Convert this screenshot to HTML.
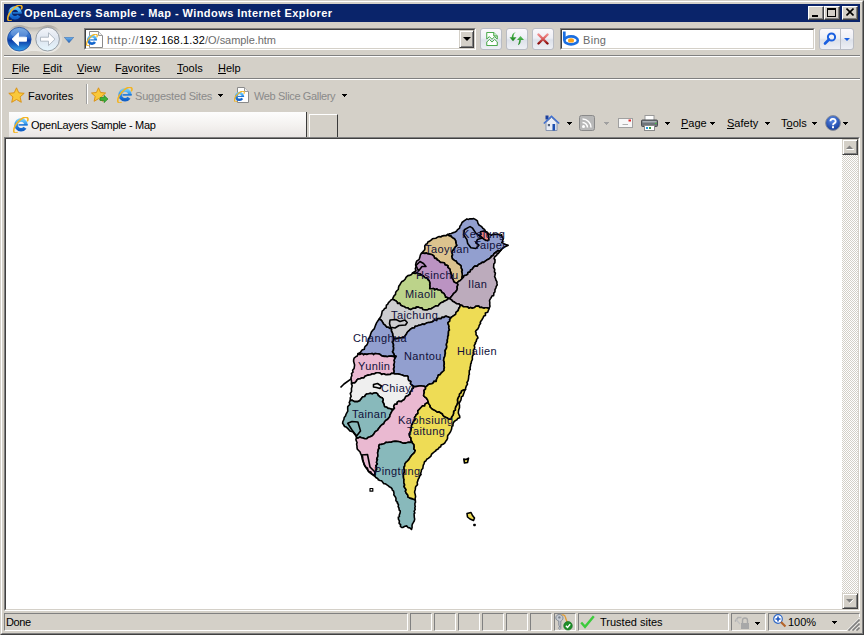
<!DOCTYPE html>
<html><head><meta charset="utf-8">
<style>
*{margin:0;padding:0;box-sizing:border-box}
html,body{width:864px;height:635px;overflow:hidden;background:#D4D0C8}
body{position:relative;font-family:"Liberation Sans",sans-serif;font-size:11px;color:#000}
.a{position:absolute}
.t{position:absolute;white-space:nowrap;line-height:13px}
.u{text-decoration:underline}
.sunk{border-style:solid;border-width:1px;border-color:#808080 #fff #fff #808080}
.btn8{position:absolute;border:1px solid #b9bcc4;border-radius:3px;background:linear-gradient(#fbf8fb,#eef0f6 45%,#dde1ea 55%,#eef0f5)}
.tri{position:absolute;width:5px;height:1px;background:currentColor;color:#000}.tri::before,.tri::after{content:"";position:absolute;height:1px;background:currentColor}.tri::before{left:1px;top:1px;width:3px}.tri::after{left:2px;top:2px;width:1px}
</style></head><body>
<svg width="0" height="0" style="position:absolute"><defs>
<linearGradient id="ieg" x1="0" y1="0" x2="0" y2="1"><stop offset="0" stop-color="#6cc8fb"/><stop offset="0.5" stop-color="#2a8de8"/><stop offset="1" stop-color="#1160c8"/></linearGradient>
<symbol id="ie" viewBox="0 0 16 16">
<path d="M12.9 7.9A4.9 4.9 0 1 0 12 10.7" fill="none" stroke="url(#ieg)" stroke-width="3.6"/>
<rect x="5.5" y="7.1" width="9.2" height="1.6" fill="#1f78d8"/>
<path d="M1 15.2C0 12 2.5 6.5 7.5 2.6C10.5 0.4 13.6 -0.2 14.6 1C15.3 1.9 14.9 3.3 14.2 4.4" fill="none" stroke="#f2b425" stroke-width="1.6"/>
<path d="M1 15.2C1.6 16 3.2 16 4.6 15.3" fill="none" stroke="#f2b425" stroke-width="1.5"/>
</symbol>
</defs></svg>
<!-- window frame -->
<div class="a" style="left:0;top:0;width:864px;height:635px;border-style:solid;border-width:1px;border-color:#D4D0C8 #404040 #404040 #D4D0C8"></div>
<div class="a" style="left:1px;top:1px;width:862px;height:633px;border-style:solid;border-width:1px;border-color:#fff #808080 #808080 #fff"></div>
<!-- title bar -->
<div class="a" style="left:4px;top:4px;width:856px;height:18px;background:#0A246A"></div>
<svg class="a" style="left:7px;top:5px" width="16" height="16"><use href="#ie"/></svg>
<div class="t" style="left:24px;top:7px;color:#fff;font-weight:bold;font-size:11px;letter-spacing:0.43px">OpenLayers Sample - Map - Windows Internet Explorer</div>
<div class="a" style="left:808px;top:6px;width:16px;height:14px;background:#D4D0C8;border-style:solid;border-width:1px;border-color:#fff #404040 #404040 #fff;box-shadow:inset -1px -1px #808080"></div>
<div class="a" style="left:812px;top:15px;width:6px;height:2px;background:#000"></div>
<div class="a" style="left:824px;top:6px;width:16px;height:14px;background:#D4D0C8;border-style:solid;border-width:1px;border-color:#fff #404040 #404040 #fff;box-shadow:inset -1px -1px #808080"></div>
<div class="a" style="left:827px;top:8px;width:9px;height:9px;border:1px solid #000;border-top-width:2px"></div>
<div class="a" style="left:842px;top:6px;width:16px;height:14px;background:#D4D0C8;border-style:solid;border-width:1px;border-color:#fff #404040 #404040 #fff;box-shadow:inset -1px -1px #808080"></div>
<svg class="a" style="left:846px;top:8px" width="8" height="8" viewBox="0 0 8 8"><path d="M0.5 0.5L7.5 7.5M7.5 0.5L0.5 7.5" stroke="#000" stroke-width="1.6"/></svg>


<!-- nav buttons -->
<svg class="a" style="left:4px;top:23px" width="60" height="32" viewBox="0 0 60 32">
<defs>
<linearGradient id="bk" x1="0" y1="0" x2="0" y2="1"><stop offset="0" stop-color="#5d9ae0"/><stop offset="0.42" stop-color="#2a68c8"/><stop offset="0.55" stop-color="#0a3aa6"/><stop offset="1" stop-color="#3aa6ee"/></linearGradient>
<linearGradient id="fw" x1="0" y1="0" x2="0" y2="1"><stop offset="0" stop-color="#f4f6fa"/><stop offset="0.5" stop-color="#dde5ef"/><stop offset="1" stop-color="#e6f6fd"/></linearGradient>
<linearGradient id="bz" x1="0" y1="0" x2="0" y2="1"><stop offset="0" stop-color="#a9a59e"/><stop offset="0.25" stop-color="#d8d5ce"/><stop offset="1" stop-color="#eceae5"/></linearGradient>
</defs>
<path d="M15.5 2.3C20 2.3 23 4.6 30 4.6S40 2.3 44.5 2.3A13.7 13.7 0 0 1 44.5 29.7C40 29.7 37 28 30 28S20 29.7 15.5 29.7A13.7 13.7 0 0 1 15.5 2.3Z" fill="url(#bz)"/>
<circle cx="15.3" cy="16.2" r="11.8" fill="url(#bk)" stroke="#1d4a9a" stroke-width="0.8"/>
<ellipse cx="15.3" cy="10" rx="8.5" ry="5" fill="#fff" opacity="0.18"/>
<path d="M8 16.2L14.5 9.8V14.2H22.5V18.2H14.5V22.6Z" fill="#fff" stroke="#fff" stroke-width="0.9" stroke-linejoin="round"/>
<circle cx="43.6" cy="16.2" r="11.8" fill="url(#fw)" stroke="#8c949c" stroke-width="0.9"/>
<path d="M51 16.2L44.5 9.8V14.2H36.5V18.2H44.5V22.6Z" fill="#fdfdfe" stroke="#a9b3bd" stroke-width="0.9" stroke-linejoin="round"/>
</svg>
<svg class="a" style="left:64px;top:37px" width="10" height="6" viewBox="0 0 10 6"><defs><linearGradient id="dd" x1="0" y1="0" x2="0" y2="1"><stop offset="0" stop-color="#6fb6f0"/><stop offset="1" stop-color="#1d5fb8"/></linearGradient></defs><path d="M0.3 0.3H9.7L5 5.8Z" fill="url(#dd)" stroke="#2a5aa0" stroke-width="0.5"/></svg>
<!-- address box -->
<div class="a" style="left:84px;top:28px;width:392px;height:22px;border-style:solid;border-width:1px;border-color:#808080 #fff #fff #808080"></div>
<div class="a" style="left:85px;top:29px;width:390px;height:20px;border-style:solid;border-width:1px;border-color:#404040 #D4D0C8 #D4D0C8 #404040;background:#fff"></div>
<svg class="a" style="left:89px;top:31px" width="14" height="17" viewBox="0 0 14 17"><path d="M0.5 0.5H9.5L13.5 4.5V16.5H0.5Z" fill="#fff" stroke="#8a8a8a"/><path d="M9.5 0.5V4.5H13.5" fill="#f0f0f0" stroke="#9a9a9a"/></svg><svg class="a" style="left:86px;top:34px" width="12" height="12" viewBox="0 0 16 16"><use href="#ie"/></svg>
<div class="t" style="left:107px;top:34px;letter-spacing:0.15px;color:#6d6d6d"><span style="letter-spacing:0.65px">http://</span><span style="color:#000">192.168.1.32</span><span style="letter-spacing:-0.05px">/O/sample.htm</span></div>
<div class="a" style="left:459px;top:30px;width:15px;height:18px;background:#D4D0C8;border-style:solid;border-width:1px;border-color:#D4D0C8 #404040 #404040 #D4D0C8;box-shadow:inset 1px 1px #fff,inset -1px -1px #808080"></div>
<div class="a" style="left:463px;top:37px;width:0;height:0;border-left:4px solid transparent;border-right:4px solid transparent;border-top:4px solid #000"></div>
<!-- compat / refresh / stop -->
<div class="btn8" style="left:480px;top:28px;width:22px;height:22px"></div>
<svg class="a" style="left:486px;top:32px" width="12" height="14" viewBox="0 0 13 16"><path d="M0.5 0.5H8.5L12.5 4.5V8L9.5 5.3L6.5 8.3L3.5 5.3L0.5 8Z" fill="#fff" stroke="#2a9a2a"/><path d="M8.5 0.5V4.5H12.5" fill="#d8f0d8" stroke="#2a9a2a"/><path d="M0.5 11.5L3.5 8.5L6.5 11.5L9.5 8.5L12.5 11.3V15.5H0.5Z" fill="#fff" stroke="#2a9a2a"/></svg>
<div class="btn8" style="left:506px;top:28px;width:22px;height:22px"></div>
<svg class="a" style="left:506px;top:28px" width="22" height="22" viewBox="0 0 22 22"><defs><linearGradient id="gr" x1="0" y1="0" x2="0" y2="1"><stop offset="0" stop-color="#5cc05a"/><stop offset="1" stop-color="#17801a"/></linearGradient></defs>
<path d="M10 4.2C8.2 5 7.6 6.6 7.4 9V9.3H10.5L7 13.3L3.5 9.3H5.7C5.9 6.3 7.3 4.6 10 4.2Z" fill="url(#gr)"/>
<path d="M12.3 17.2C14.1 16.4 14.7 14.6 14.9 12.3V12H18L14.5 8L11 12H13.2C13 15 11.8 16.6 12.3 17.2Z" fill="url(#gr)"/></svg>
<div class="btn8" style="left:532px;top:28px;width:22px;height:22px"></div>
<svg class="a" style="left:537px;top:33px" width="12" height="12" viewBox="0 0 12 12"><defs><linearGradient id="xr" x1="0" y1="0" x2="0" y2="1"><stop offset="0" stop-color="#f08a8a"/><stop offset="0.5" stop-color="#d85a5a"/><stop offset="1" stop-color="#8a0c0c"/></linearGradient></defs><path d="M1.5 1.5L10.5 10.5M10.5 1.5L1.5 10.5" stroke="url(#xr)" stroke-width="2.4" stroke-linecap="round"/></svg>
<!-- search -->
<div class="a" style="left:560px;top:28px;width:255px;height:22px;border-style:solid;border-width:1px;border-color:#808080 #fff #fff #808080"></div>
<div class="a" style="left:561px;top:29px;width:253px;height:20px;border-style:solid;border-width:1px;border-color:#404040 #D4D0C8 #D4D0C8 #404040;background:#fff"></div>
<svg class="a" style="left:562px;top:31px" width="18" height="16" viewBox="0 0 18 16"><path d="M2.3 0.5V9.4" stroke="#1a6ee0" stroke-width="2.7"/><ellipse cx="9.1" cy="9.4" rx="6.7" ry="4" fill="none" stroke="#1a6ee0" stroke-width="2.6"/><ellipse cx="9" cy="9.4" rx="3" ry="2.2" fill="#fba21a"/></svg>
<div class="t" style="left:583px;top:34px;color:#6a6a6a;letter-spacing:0.3px">Bing</div>
<div class="btn8" style="left:819px;top:28px;width:35px;height:22px"></div>
<div class="a" style="left:840px;top:29px;width:1px;height:20px;background:#b9bcc4"></div>
<svg class="a" style="left:822px;top:31px" width="16" height="16" viewBox="0 0 16 16"><circle cx="9.5" cy="6" r="3.6" fill="none" stroke="#1a5fe0" stroke-width="2"/><path d="M7 8.5L3 12.5" stroke="#1a5fe0" stroke-width="2.6" stroke-linecap="round"/></svg>
<div class="a" style="left:844px;top:38px;width:0;height:0;border-left:3px solid transparent;border-right:3px solid transparent;border-top:3px solid #1a5fe0"></div>

<!-- menu -->
<div class="t" style="left:12px;top:62px"><span class="u">F</span>ile</div>
<div class="t" style="left:43px;top:62px"><span class="u">E</span>dit</div>
<div class="t" style="left:77px;top:62px"><span class="u">V</span>iew</div>
<div class="t" style="left:115px;top:62px">F<span class="u">a</span>vorites</div>
<div class="t" style="left:177px;top:62px"><span class="u">T</span>ools</div>
<div class="t" style="left:218px;top:62px"><span class="u">H</span>elp</div>

<!-- favorites bar -->
<svg class="a" style="left:8px;top:87px" width="17" height="17" viewBox="0 0 17 17"><path d="M8.5 0.8L10.8 5.8L16.2 6.3L12.1 9.9L13.3 15.3L8.5 12.5L3.7 15.3L4.9 9.9L0.8 6.3L6.2 5.8Z" fill="#f9c83a" stroke="#d98d0e" stroke-width="0.9"/></svg>
<div class="t" style="left:28px;top:90px">Favorites</div>
<div class="a" style="left:86px;top:84px;width:1px;height:20px;background:#a0a0a0"></div>
<div class="a" style="left:87px;top:84px;width:1px;height:20px;background:#fff"></div>
<svg class="a" style="left:91px;top:87px" width="18" height="17" viewBox="0 0 18 17"><path d="M7.5 0.8L9.6 5.5L14.6 6L10.8 9.3L11.9 14.3L7.5 11.7L3.1 14.3L4.2 9.3L0.5 6L5.4 5.5Z" fill="#f9c83a" stroke="#d98d0e" stroke-width="0.9"/><path d="M9 10.5H13V8.3L17 12L13 15.7V13.5H9Z" fill="#3fb236" stroke="#1f7f1f" stroke-width="0.6"/></svg>
<svg class="a" style="left:117px;top:87px" width="16" height="16"><use href="#ie"/></svg>
<div class="t" style="left:135px;top:90px;color:#8a8a8a;letter-spacing:-0.2px">Suggested Sites</div>
<div class="tri" style="left:218px;top:94px"></div>
<svg class="a" style="left:237px;top:87px" width="12" height="16" viewBox="0 0 12 16"><path d="M0.5 0.5H7.5L11.5 4.5V15.5H0.5Z" fill="#fff" stroke="#8a8a8a"/><path d="M7.5 0.5V4.5H11.5" fill="#eee" stroke="#9a9a9a"/></svg><svg class="a" style="left:234px;top:91px" width="11" height="11" viewBox="0 0 16 16"><use href="#ie"/></svg>
<div class="t" style="left:254px;top:90px;color:#8a8a8a;letter-spacing:-0.35px">Web Slice Gallery</div>
<div class="tri" style="left:342px;top:94px"></div>

<!-- tab row -->
<div class="a" style="left:9px;top:112px;width:298px;height:26px;background:linear-gradient(#fdfdfd,#f4f2f0 50%,#e8e4e2);border-right:1px solid #3a3a3a"></div>
<svg class="a" style="left:13px;top:117px" width="16" height="16"><use href="#ie"/></svg>
<div class="t" style="left:31px;top:119px;letter-spacing:-0.3px">OpenLayers Sample - Map</div>
<div class="a" style="left:309px;top:114px;width:29px;height:24px;border-style:solid;border-width:1px 1px 0 1px;border-color:#fff #3a3a3a #fff #fff"></div>


<!-- command bar -->
<svg class="a" style="left:543px;top:115px" width="17" height="16" viewBox="0 0 17 16"><rect x="2.5" y="0.5" width="3" height="4" fill="#1c3f9c"/><path d="M3 7.5V15.5H14V7.5L8.5 2.5Z" fill="#e9edf5" stroke="#7d8cab" stroke-width="0.9"/><path d="M0.8 8.5L8.5 1.2L16.2 8.5" fill="none" stroke="#3d6ed0" stroke-width="1.5"/><rect x="9.5" y="9" width="2.6" height="6.5" fill="#1d4fb0"/><rect x="4.8" y="9" width="2.2" height="2.2" fill="#54637d"/></svg>
<div class="tri" style="left:567px;top:122px"></div>
<svg class="a" style="left:579px;top:115px" width="16" height="16" viewBox="0 0 16 16"><rect x="0.5" y="0.5" width="15" height="15" rx="2" fill="#b8b8b8" stroke="#8a8a8a"/><circle cx="4.5" cy="11.5" r="1.5" fill="#fff"/><path d="M3.5 7.5a5 5 0 0 1 5 5M3.5 4a8.5 8.5 0 0 1 8.5 8.5" fill="none" stroke="#fff" stroke-width="1.5"/></svg>
<div class="tri" style="left:604px;top:122px;color:#a0a0a0"></div>
<svg class="a" style="left:618px;top:118px" width="15" height="10" viewBox="0 0 15 10"><rect x="0.5" y="0.5" width="14" height="9" fill="#f7f7f7" stroke="#a0a0a0"/><path d="M4.5 6.5H10" stroke="#b0b0b0"/><rect x="10.5" y="1.5" width="2.5" height="2" fill="#e02828"/></svg>
<svg class="a" style="left:641px;top:115px" width="17" height="16" viewBox="0 0 17 16"><rect x="4" y="0.5" width="9" height="5" fill="#fff" stroke="#9a9a9a"/><rect x="0.5" y="5" width="16" height="6.5" rx="1" fill="#6e747a" stroke="#4a4e52"/><rect x="1.5" y="6" width="14" height="1.5" fill="#a9afb5"/><rect x="3.5" y="10.5" width="10" height="5" fill="#fff" stroke="#8a8a8a"/><rect x="5" y="12" width="2" height="2" fill="#2a9ae0"/><rect x="8" y="12" width="2" height="2" fill="#3aa040"/><rect x="14" y="7.8" width="1.5" height="1.2" fill="#40c040"/></svg>
<div class="tri" style="left:665px;top:122px"></div>
<div class="t" style="left:681px;top:117px"><span class="u">P</span>age</div>
<div class="tri" style="left:710px;top:122px"></div>
<div class="t" style="left:727px;top:117px"><span class="u">S</span>afety</div>
<div class="tri" style="left:765px;top:122px"></div>
<div class="t" style="left:781px;top:117px">T<span class="u">o</span>ols</div>
<div class="tri" style="left:812px;top:122px"></div>
<svg class="a" style="left:825px;top:115px" width="16" height="16" viewBox="0 0 16 16"><defs><radialGradient id="hg" cx="0.45" cy="0.3" r="0.7"><stop offset="0" stop-color="#5a8ae8"/><stop offset="1" stop-color="#143c9a"/></radialGradient></defs><circle cx="8" cy="8" r="7.4" fill="url(#hg)" stroke="#8a8e96" stroke-width="1"/><path d="M5.4 6.2a2.6 2.4 0 1 1 3.7 2.2c-0.8 0.4-1.1 0.9-1.1 1.8" fill="none" stroke="#fff" stroke-width="1.8"/><rect x="7" y="11.2" width="2" height="2" fill="#fff"/></svg>
<div class="tri" style="left:843px;top:122px"></div>


<!-- address row -->
<div class="a" style="left:4px;top:55px;width:856px;height:1px;background:#808080"></div>
<div class="a" style="left:4px;top:56px;width:856px;height:1px;background:#fff"></div>
<div class="a" style="left:4px;top:78px;width:856px;height:1px;background:#808080"></div>
<div class="a" style="left:4px;top:79px;width:856px;height:1px;background:#fff"></div>

<!-- content area -->
<div class="a" style="left:4px;top:137px;width:856px;height:474px;border-style:solid;border-width:1px;border-color:#808080 #fff #fff #808080"></div>
<div class="a" style="left:5px;top:138px;width:854px;height:472px;border-style:solid;border-width:1px;border-color:#404040 #D4D0C8 #D4D0C8 #404040;background:#fff"></div>

<!--MAP--><svg class="a" style="left:0;top:0" width="864" height="635" viewBox="0 0 864 635">
<g stroke="#000" stroke-width="1.6" stroke-linejoin="round">
<path d="M501.5 249.5 L502.9 247.9 L505.1 246.7 L506.6 246.1 L508.2 245.2 L505.9 244.6 L504.3 243.9 L502.7 242.8 L501.7 242.8 L502.4 241.2 L503.3 238.7 L501.9 236.3 L501.7 234.7 L500.3 235.4 L498.6 234.5 L497.6 234.0 L495.8 234.4 L493.1 234.1 L491.7 235.2 L490.4 234.7 L488.3 233.7 L487.3 232.3 L485.5 231.4 L484.5 229.4 L482.7 228.3 L482.3 227.4 L480.9 226.1 L479.0 225.0 L477.9 223.1 L477.4 220.9 L475.3 219.4 L473.4 218.5 L472.2 218.9 L469.8 218.8 L468.6 219.4 L466.9 218.9 L465.6 219.8 L464.4 220.7 L462.0 222.5 L461.1 224.8 L459.9 226.3 L459.6 228.2 L457.3 229.8 L456.7 231.0 L454.7 232.3 L453.4 232.6 L451.3 233.5 L449.3 233.9 L447.4 234.5 L449.3 235.9 L450.9 235.8 L451.1 236.6 L453.1 238.2 L454.5 238.8 L455.7 240.8 L455.8 242.5 L456.1 243.8 L456.7 245.4 L454.9 247.2 L454.1 248.8 L453.6 249.2 L452.3 250.9 L451.7 252.5 L452.5 255.1 L451.7 256.1 L452.3 258.7 L453.6 259.9 L454.7 260.5 L456.3 261.3 L457.1 263.0 L459.3 264.4 L460.5 265.3 L461.2 266.4 L461.0 267.8 L462.3 270.2 L461.6 271.0 L462.1 273.7 L462.3 275.2 L461.9 276.7 L461.8 279.0 L463.6 277.0 L464.2 275.5 L466.0 275.3 L467.7 274.3 L468.0 272.6 L470.1 271.9 L470.7 269.7 L472.0 269.5 L473.6 267.2 L474.8 266.1 L477.4 266.1 L478.5 264.4 L480.7 263.6 L482.4 262.2 L483.7 262.4 L485.3 261.2 L487.8 259.4 L489.0 258.9 L490.9 257.4 L491.4 256.1 L493.0 255.7 L494.0 253.7 L494.9 253.0 L496.3 252.0 L497.8 250.6 L500.1 251.0 L501.5 249.5Z" fill="#929fcf"/>
<path d="M447.4 234.5 L446.2 235.6 L444.0 235.6 L441.8 236.1 L441.0 236.9 L439.1 236.6 L438.0 236.9 L435.8 238.2 L433.8 238.5 L432.4 238.7 L431.4 239.9 L429.4 241.4 L428.1 241.7 L427.1 243.8 L425.9 244.3 L424.7 245.9 L424.9 248.2 L424.7 249.8 L423.7 250.9 L421.5 253.2 L423.5 253.2 L424.8 253.4 L426.3 253.1 L428.2 253.9 L430.3 254.3 L432.4 254.8 L433.9 256.1 L434.5 258.1 L436.6 258.6 L437.0 259.8 L439.1 260.9 L440.4 262.4 L441.7 262.5 L444.3 262.8 L445.1 264.9 L446.8 265.3 L448.0 266.0 L447.8 267.4 L449.9 269.1 L450.1 270.8 L450.9 272.9 L450.7 273.5 L452.1 275.6 L451.5 277.3 L452.3 278.5 L453.1 279.6 L453.8 281.8 L455.6 282.9 L457.0 283.0 L459.0 281.0 L459.7 281.0 L461.8 279.0 L461.9 276.7 L462.3 275.2 L462.1 273.7 L461.6 271.0 L462.3 270.2 L461.0 267.8 L461.2 266.4 L460.5 265.3 L459.3 264.4 L457.1 263.0 L456.3 261.3 L454.7 260.5 L453.6 259.9 L452.3 258.7 L451.7 256.1 L452.5 255.1 L451.7 252.5 L452.3 250.9 L453.6 249.2 L454.1 248.8 L454.9 247.2 L456.7 245.4 L456.1 243.8 L455.8 242.5 L455.7 240.8 L454.5 238.8 L453.1 238.2 L451.1 236.6 L450.9 235.8 L449.3 235.9 L447.4 234.5Z" fill="#dcc38e"/>
<path d="M421.5 253.2 L420.4 254.9 L419.8 257.4 L419.3 258.7 L418.9 259.6 L416.6 261.2 L416.0 263.1 L415.6 265.0 L416.1 266.6 L415.3 268.8 L416.0 270.8 L414.1 272.0 L412.6 273.0 L415.2 273.5 L417.2 272.8 L418.1 273.8 L420.4 274.1 L422.6 275.9 L423.2 275.9 L424.7 277.4 L426.9 278.0 L428.2 280.0 L429.2 280.7 L429.9 283.1 L429.7 284.7 L429.9 286.4 L429.7 288.7 L431.3 288.7 L433.8 288.6 L434.7 289.8 L436.7 289.0 L438.2 290.0 L440.7 290.2 L442.0 292.5 L443.9 293.4 L445.3 296.1 L445.5 297.3 L446.6 297.3 L448.5 298.5 L450.2 297.9 L451.4 296.4 L452.6 295.0 L453.8 293.3 L455.7 291.8 L456.8 290.2 L457.3 288.7 L457.1 286.7 L458.1 284.7 L457.0 283.0 L455.6 282.9 L453.8 281.8 L453.1 279.6 L452.3 278.5 L451.5 277.3 L452.1 275.6 L450.7 273.5 L450.9 272.9 L450.1 270.8 L449.9 269.1 L447.8 267.4 L448.0 266.0 L446.8 265.3 L445.1 264.9 L444.3 262.8 L441.7 262.5 L440.4 262.4 L439.1 260.9 L437.0 259.8 L436.6 258.6 L434.5 258.1 L433.9 256.1 L432.4 254.8 L430.3 254.3 L428.2 253.9 L426.3 253.1 L424.8 253.4 L423.5 253.2 L421.5 253.2Z" fill="#bb93c2"/>
<path d="M412.6 273.0 L411.6 274.4 L409.3 275.4 L407.9 275.6 L406.0 277.4 L405.1 279.3 L403.6 280.8 L401.6 281.8 L400.8 283.2 L399.7 285.1 L399.0 285.8 L398.5 287.5 L398.3 289.5 L397.1 290.5 L395.7 292.2 L395.5 294.4 L394.0 295.8 L392.9 298.2 L392.7 299.2 L394.7 300.3 L395.9 300.9 L397.1 302.0 L397.5 303.4 L399.9 303.3 L400.6 305.0 L401.8 305.8 L402.9 306.2 L404.2 306.6 L405.9 307.8 L408.0 307.9 L408.5 308.7 L410.7 309.6 L412.5 308.6 L413.5 308.2 L415.8 308.2 L416.2 307.0 L418.4 307.1 L419.9 307.9 L421.9 307.9 L422.8 309.5 L425.0 309.9 L427.4 309.9 L429.1 308.8 L430.8 309.0 L432.9 307.6 L434.2 306.9 L435.8 305.9 L438.2 305.9 L439.2 304.4 L440.9 302.7 L443.1 302.0 L444.8 300.7 L445.1 300.9 L447.0 299.9 L448.5 298.5 L446.6 297.3 L445.5 297.3 L445.3 296.1 L443.9 293.4 L442.0 292.5 L440.7 290.2 L438.2 290.0 L436.7 289.0 L434.7 289.8 L433.8 288.6 L431.3 288.7 L429.7 288.7 L429.9 286.4 L429.7 284.7 L429.9 283.1 L429.2 280.7 L428.2 280.0 L426.9 278.0 L424.7 277.4 L423.2 275.9 L422.6 275.9 L420.4 274.1 L418.1 273.8 L417.2 272.8 L415.2 273.5 L412.6 273.0Z" fill="#bcd38a"/>
<path d="M501.5 249.5 L500.1 251.0 L497.8 250.6 L496.3 252.0 L494.9 253.0 L494.0 253.7 L493.0 255.7 L491.4 256.1 L490.9 257.4 L489.0 258.9 L487.8 259.4 L485.3 261.2 L483.7 262.4 L482.4 262.2 L480.7 263.6 L478.5 264.4 L477.4 266.1 L474.8 266.1 L473.6 267.2 L472.0 269.5 L470.7 269.7 L470.1 271.9 L468.0 272.6 L467.7 274.3 L466.0 275.3 L464.2 275.5 L463.6 277.0 L461.8 279.0 L459.7 281.0 L459.0 281.0 L457.0 283.0 L458.1 284.7 L457.1 286.7 L457.3 288.7 L456.8 290.2 L455.7 291.8 L453.8 293.3 L452.6 295.0 L451.4 296.4 L450.2 297.9 L448.5 298.5 L450.1 298.9 L451.7 300.1 L452.6 301.3 L454.7 302.3 L456.5 303.6 L458.8 303.9 L460.4 305.2 L461.9 305.4 L463.5 306.8 L465.9 306.8 L467.6 306.9 L468.9 308.3 L470.6 307.5 L472.2 308.3 L474.6 307.5 L476.0 306.2 L478.7 306.0 L479.9 307.5 L481.9 307.4 L484.2 308.3 L484.8 307.7 L486.7 307.8 L489.0 308.6 L490.0 306.3 L489.7 304.5 L489.8 302.7 L489.5 300.5 L490.2 299.1 L490.7 298.3 L492.1 295.8 L493.6 295.6 L493.9 292.9 L494.9 292.0 L495.0 289.6 L495.9 287.8 L496.3 286.3 L497.3 284.9 L497.0 283.9 L496.9 281.6 L496.0 280.2 L495.5 278.4 L494.6 276.7 L494.9 275.5 L495.4 273.0 L494.4 271.9 L494.7 269.4 L493.6 267.5 L493.7 266.0 L493.8 264.0 L494.9 262.7 L495.0 259.6 L494.0 258.7 L494.9 256.5 L496.7 255.3 L497.4 253.4 L498.3 253.6 L499.6 251.8 L501.5 249.5Z" fill="#bcabbc"/>
<path d="M392.7 299.2 L391.5 299.7 L390.4 300.7 L388.5 302.6 L387.6 304.4 L386.4 305.2 L386.1 307.9 L384.5 308.6 L383.6 310.0 L382.2 311.2 L381.8 313.3 L381.3 315.5 L380.7 316.7 L379.2 319.0 L381.3 320.2 L382.8 322.6 L383.6 324.1 L385.1 325.2 L386.8 327.3 L388.3 327.2 L389.4 328.3 L391.5 328.9 L391.3 330.8 L392.3 332.8 L392.6 333.7 L392.8 336.0 L393.6 336.9 L394.0 339.1 L395.7 338.4 L396.8 338.6 L399.2 338.0 L400.9 337.9 L402.6 337.5 L404.5 337.0 L405.7 335.0 L406.6 333.7 L407.5 332.0 L409.3 330.4 L410.4 329.3 L410.6 329.1 L412.5 328.0 L414.4 328.0 L415.1 326.4 L417.3 326.0 L418.5 325.4 L420.5 325.0 L422.8 324.0 L424.0 324.5 L426.4 323.1 L428.3 322.5 L429.7 322.5 L431.9 322.0 L433.5 321.0 L434.4 319.9 L436.7 320.6 L437.2 318.7 L439.2 318.6 L441.2 318.7 L441.8 317.4 L444.0 317.4 L445.5 316.2 L446.8 316.4 L449.0 317.3 L451.0 317.8 L451.9 316.8 L454.1 315.4 L455.6 314.4 L456.0 312.3 L458.1 310.7 L458.8 308.4 L459.5 307.6 L460.4 305.2 L458.8 303.9 L456.5 303.6 L454.7 302.3 L452.6 301.3 L451.7 300.1 L450.1 298.9 L448.5 298.5 L447.0 299.9 L445.1 300.9 L444.8 300.7 L443.1 302.0 L440.9 302.7 L439.2 304.4 L438.2 305.9 L435.8 305.9 L434.2 306.9 L432.9 307.6 L430.8 309.0 L429.1 308.8 L427.4 309.9 L425.0 309.9 L422.8 309.5 L421.9 307.9 L419.9 307.9 L418.4 307.1 L416.2 307.0 L415.8 308.2 L413.5 308.2 L412.5 308.6 L410.7 309.6 L408.5 308.7 L408.0 307.9 L405.9 307.8 L404.2 306.6 L402.9 306.2 L401.8 305.8 L400.6 305.0 L399.9 303.3 L397.5 303.4 L397.1 302.0 L395.9 300.9 L394.7 300.3 L392.7 299.2Z" fill="#cdcdcf"/>
<path d="M379.2 319.0 L377.6 321.2 L377.5 321.4 L376.6 322.7 L375.7 324.9 L374.7 327.5 L374.2 328.9 L372.6 330.4 L371.4 332.0 L370.5 334.5 L370.2 335.9 L369.5 337.8 L368.5 338.5 L368.1 340.4 L367.9 342.6 L367.4 343.8 L366.7 345.2 L365.2 346.4 L364.7 347.1 L364.3 349.3 L362.0 350.1 L360.8 351.8 L360.3 352.5 L358.0 353.7 L359.7 354.5 L362.1 353.5 L363.7 354.8 L364.4 354.0 L366.8 354.4 L368.9 353.8 L370.8 353.8 L372.4 353.5 L373.6 354.6 L374.9 353.5 L377.0 353.7 L378.8 353.9 L379.9 354.3 L381.8 355.9 L384.4 356.4 L385.9 356.3 L387.1 356.7 L388.7 356.3 L391.2 356.1 L393.2 356.4 L394.4 356.9 L396.0 356.3 L394.4 355.5 L394.0 353.8 L392.5 351.8 L393.3 350.8 L393.7 347.9 L393.3 346.5 L393.6 345.0 L393.0 342.8 L392.3 342.0 L393.5 341.0 L394.0 339.1 L393.6 336.9 L392.8 336.0 L392.6 333.7 L392.3 332.8 L391.3 330.8 L391.5 328.9 L389.4 328.3 L388.3 327.2 L386.8 327.3 L385.1 325.2 L383.6 324.1 L382.8 322.6 L381.3 320.2 L379.2 319.0Z" fill="#929fcf"/>
<path d="M451.0 317.8 L449.0 317.3 L446.8 316.4 L445.5 316.2 L444.0 317.4 L441.8 317.4 L441.2 318.7 L439.2 318.6 L437.2 318.7 L436.7 320.6 L434.4 319.9 L433.5 321.0 L431.9 322.0 L429.7 322.5 L428.3 322.5 L426.4 323.1 L424.0 324.5 L422.8 324.0 L420.5 325.0 L418.5 325.4 L417.3 326.0 L415.1 326.4 L414.4 328.0 L412.5 328.0 L410.6 329.1 L410.4 329.3 L409.3 330.4 L407.5 332.0 L406.6 333.7 L405.7 335.0 L404.5 337.0 L402.6 337.5 L400.9 337.9 L399.2 338.0 L396.8 338.6 L395.7 338.4 L394.0 339.1 L393.5 341.0 L392.3 342.0 L393.0 342.8 L393.6 345.0 L393.3 346.5 L393.7 347.9 L393.3 350.8 L392.5 351.8 L394.0 353.8 L394.4 355.5 L396.0 356.3 L394.8 358.2 L393.9 360.6 L394.4 361.4 L394.3 362.9 L393.6 365.0 L394.3 366.8 L393.4 368.8 L393.5 369.6 L394.0 371.1 L393.6 373.5 L394.8 374.0 L397.5 373.9 L399.5 374.3 L401.2 374.7 L403.5 375.4 L404.0 376.0 L405.3 375.7 L407.6 376.0 L408.1 377.1 L408.2 379.4 L408.8 380.5 L410.8 381.4 L410.3 383.6 L411.4 384.9 L413.5 386.5 L415.7 386.6 L417.8 386.2 L420.4 385.7 L421.7 385.9 L424.1 386.2 L425.5 387.0 L426.7 386.3 L428.3 384.6 L429.2 384.1 L431.8 383.7 L433.3 382.9 L433.9 381.4 L436.2 381.5 L436.5 379.4 L436.7 379.0 L437.8 376.8 L438.5 374.8 L439.7 374.9 L441.1 373.2 L442.9 371.5 L444.1 370.5 L444.0 369.1 L444.4 367.5 L444.0 365.7 L444.3 364.1 L444.2 361.9 L443.6 360.4 L444.0 358.0 L444.9 356.0 L445.1 354.2 L445.4 353.3 L445.1 350.5 L446.4 348.3 L446.8 346.9 L446.5 345.5 L446.4 344.0 L447.4 342.0 L447.3 340.1 L447.8 338.1 L447.7 336.7 L448.4 335.5 L448.4 333.7 L448.6 331.0 L449.5 330.0 L448.7 327.8 L449.1 326.7 L448.7 325.1 L448.0 323.5 L448.0 322.6 L449.9 321.0 L449.6 319.8 L451.0 317.8Z" fill="#929fcf"/>
<path d="M358.0 353.7 L357.4 355.9 L356.1 356.5 L354.1 358.2 L353.7 359.5 L353.6 361.2 L354.3 363.9 L354.6 365.0 L354.3 367.1 L354.1 368.4 L352.6 370.3 L353.0 372.2 L351.5 373.5 L351.9 375.4 L351.0 377.7 L351.2 379.7 L351.5 381.1 L351.5 384.0 L353.5 382.7 L354.7 382.9 L356.1 381.5 L357.2 379.7 L358.3 379.0 L360.5 378.6 L362.4 377.8 L363.9 377.9 L365.0 376.2 L367.5 375.3 L368.2 375.1 L370.6 374.7 L371.9 374.0 L374.0 373.9 L376.5 372.8 L378.3 372.8 L380.4 373.2 L381.6 374.4 L383.6 373.7 L385.9 374.7 L387.2 374.6 L390.3 374.5 L391.5 373.4 L393.6 373.5 L394.0 371.1 L393.5 369.6 L393.4 368.8 L394.3 366.8 L393.6 365.0 L394.3 362.9 L394.4 361.4 L393.9 360.6 L394.8 358.2 L396.0 356.3 L394.4 356.9 L393.2 356.4 L391.2 356.1 L388.7 356.3 L387.1 356.7 L385.9 356.3 L384.4 356.4 L381.8 355.9 L379.9 354.3 L378.8 353.9 L377.0 353.7 L374.9 353.5 L373.6 354.6 L372.4 353.5 L370.8 353.8 L368.9 353.8 L366.8 354.4 L364.4 354.0 L363.7 354.8 L362.1 353.5 L359.7 354.5 L358.0 353.7Z" fill="#eab9d1"/>
<path d="M351.5 384.0 L352.2 385.9 L351.4 388.8 L351.5 390.2 L351.5 391.6 L350.3 393.5 L351.2 396.4 L350.3 397.8 L350.3 400.4 L352.1 400.3 L354.4 401.6 L356.4 401.6 L357.9 401.6 L359.7 400.8 L360.7 399.4 L361.4 398.5 L362.4 397.1 L364.7 396.5 L365.7 394.7 L366.8 394.0 L368.5 393.7 L370.5 393.3 L372.4 393.9 L373.4 393.2 L375.7 392.7 L377.4 393.6 L378.2 395.5 L378.8 395.8 L380.3 397.2 L382.1 397.8 L383.3 399.6 L382.5 401.5 L383.7 403.5 L384.1 405.1 L384.6 406.7 L386.9 407.3 L388.1 408.4 L389.6 408.5 L391.6 409.2 L393.6 409.3 L394.5 408.2 L393.7 406.5 L394.8 404.2 L397.0 404.1 L397.3 402.2 L398.8 401.2 L401.5 401.6 L402.5 400.4 L404.0 399.8 L405.2 397.9 L405.7 396.6 L408.0 395.7 L408.6 395.0 L410.1 394.0 L410.1 392.1 L411.1 391.3 L411.9 389.2 L413.5 388.0 L413.5 386.5 L411.4 384.9 L410.3 383.6 L410.8 381.4 L408.8 380.5 L408.2 379.4 L408.1 377.1 L407.6 376.0 L405.3 375.7 L404.0 376.0 L403.5 375.4 L401.2 374.7 L399.5 374.3 L397.5 373.9 L394.8 374.0 L393.6 373.5 L391.5 373.4 L390.3 374.5 L387.2 374.6 L385.9 374.7 L383.6 373.7 L381.6 374.4 L380.4 373.2 L378.3 372.8 L376.5 372.8 L374.0 373.9 L371.9 374.0 L370.6 374.7 L368.2 375.1 L367.5 375.3 L365.0 376.2 L363.9 377.9 L362.4 377.8 L360.5 378.6 L358.3 379.0 L357.2 379.7 L356.1 381.5 L354.7 382.9 L353.5 382.7 L351.5 384.0Z" fill="#efefef"/>
<path d="M350.3 400.4 L349.2 402.7 L350.0 404.2 L348.5 405.8 L347.7 406.8 L347.7 409.3 L347.8 411.2 L346.5 413.4 L345.7 415.0 L345.7 415.7 L344.2 417.5 L343.9 419.5 L342.9 421.5 L342.6 423.3 L343.5 424.5 L344.6 426.5 L346.2 427.1 L347.7 428.4 L349.1 430.0 L350.1 431.1 L351.5 431.5 L352.9 431.8 L354.1 433.5 L355.3 434.9 L356.6 437.3 L357.7 438.2 L359.8 437.1 L361.4 437.8 L362.7 438.0 L365.0 438.7 L366.8 438.6 L368.2 437.3 L369.6 437.0 L372.3 435.7 L373.2 434.7 L373.9 433.9 L375.2 431.7 L375.9 431.3 L378.0 429.8 L378.6 428.4 L379.3 427.8 L380.8 425.8 L381.9 424.7 L383.8 423.7 L384.6 421.7 L386.0 420.2 L387.7 419.2 L388.5 418.2 L389.9 416.4 L390.0 414.9 L390.9 413.3 L391.2 412.6 L392.4 410.4 L393.6 409.3 L391.6 409.2 L389.6 408.5 L388.1 408.4 L386.9 407.3 L384.6 406.7 L384.1 405.1 L383.7 403.5 L382.5 401.5 L383.3 399.6 L382.1 397.8 L380.3 397.2 L378.8 395.8 L378.2 395.5 L377.4 393.6 L375.7 392.7 L373.4 393.2 L372.4 393.9 L370.5 393.3 L368.5 393.7 L366.8 394.0 L365.7 394.7 L364.7 396.5 L362.4 397.1 L361.4 398.5 L360.7 399.4 L359.7 400.8 L357.9 401.6 L356.4 401.6 L354.4 401.6 L352.1 400.3 L350.3 400.4Z" fill="#88b9bb"/>
<path d="M356.6 437.3 L355.9 439.4 L356.2 440.7 L357.1 442.5 L356.6 444.1 L357.0 446.2 L357.0 447.5 L357.3 449.1 L358.4 450.2 L360.1 452.0 L360.7 453.9 L361.5 455.0 L362.6 456.6 L362.7 458.5 L363.0 460.5 L363.4 462.0 L364.0 464.3 L364.5 465.4 L365.9 467.5 L367.4 468.0 L367.9 470.6 L368.9 471.4 L370.9 472.0 L371.3 473.6 L372.8 474.4 L374.9 475.9 L374.9 474.1 L375.4 472.5 L376.0 470.3 L376.7 469.2 L376.4 466.9 L375.9 465.7 L377.4 463.9 L376.5 462.3 L377.5 459.4 L376.7 459.1 L377.9 456.3 L377.9 455.0 L377.6 452.7 L378.0 451.9 L378.4 449.2 L379.5 448.4 L378.7 446.8 L379.4 444.5 L381.2 444.4 L382.9 444.0 L384.7 443.4 L385.9 442.4 L387.2 442.5 L389.4 442.3 L391.1 442.3 L392.9 441.5 L394.7 441.4 L395.9 441.4 L398.0 441.5 L399.7 441.8 L401.5 442.6 L403.2 443.3 L404.9 443.0 L405.9 443.1 L408.4 442.3 L410.5 442.4 L412.0 441.5 L411.4 441.1 L411.0 439.9 L411.0 437.9 L409.8 436.9 L409.4 435.0 L409.3 433.6 L410.5 431.8 L411.1 430.3 L411.1 429.2 L411.5 426.4 L411.6 425.1 L412.6 424.0 L412.8 422.6 L414.2 420.7 L415.2 419.7 L414.5 417.5 L415.7 416.1 L415.9 415.2 L418.0 413.3 L417.8 410.9 L418.9 409.8 L420.3 408.2 L421.2 407.3 L422.4 405.9 L424.6 405.9 L425.2 403.9 L427.5 402.7 L428.3 402.0 L427.6 399.9 L426.5 398.2 L424.8 396.8 L423.6 395.7 L423.8 394.3 L424.3 392.6 L424.0 390.3 L425.6 388.9 L425.5 387.0 L424.1 386.2 L421.7 385.9 L420.4 385.7 L417.8 386.2 L415.7 386.6 L413.5 386.5 L413.5 388.0 L411.9 389.2 L411.1 391.3 L410.1 392.1 L410.1 394.0 L408.6 395.0 L408.0 395.7 L405.7 396.6 L405.2 397.9 L404.0 399.8 L402.5 400.4 L401.5 401.6 L398.8 401.2 L397.3 402.2 L397.0 404.1 L394.8 404.2 L393.7 406.5 L394.5 408.2 L393.6 409.3 L392.4 410.4 L391.2 412.6 L390.9 413.3 L390.0 414.9 L389.9 416.4 L388.5 418.2 L387.7 419.2 L386.0 420.2 L384.6 421.7 L383.8 423.7 L381.9 424.7 L380.8 425.8 L379.3 427.8 L378.6 428.4 L378.0 429.8 L375.9 431.3 L375.2 431.7 L373.9 433.9 L373.2 434.7 L372.3 435.7 L369.6 437.0 L368.2 437.3 L366.8 438.6 L365.0 438.7 L362.7 438.0 L361.4 437.8 L359.8 437.1 L357.7 438.2 L356.6 437.3Z" fill="#eab9d1"/>
<path d="M374.9 475.9 L375.5 477.3 L377.9 478.8 L378.2 479.7 L380.0 480.5 L381.6 480.8 L383.3 482.9 L383.7 483.7 L385.5 483.8 L386.6 484.7 L388.8 486.2 L388.9 486.6 L390.7 487.4 L392.0 488.6 L392.2 489.9 L393.6 491.1 L394.0 493.4 L393.8 494.8 L395.2 496.7 L396.0 498.3 L395.9 500.7 L397.6 502.3 L397.2 502.8 L398.5 504.8 L398.1 506.8 L398.8 507.5 L399.3 510.3 L400.3 510.9 L400.1 512.9 L399.2 515.2 L399.4 516.5 L398.3 517.1 L398.5 519.4 L399.4 520.9 L399.1 523.3 L400.6 524.7 L400.4 526.4 L401.7 527.5 L402.7 527.5 L404.9 526.2 L406.6 525.9 L408.3 527.7 L409.5 527.7 L411.5 529.5 L412.1 527.4 L412.0 525.6 L412.4 524.0 L413.4 522.4 L414.2 521.0 L414.7 519.1 L414.3 517.3 L414.2 515.4 L414.1 513.8 L414.9 513.0 L414.1 511.3 L415.3 509.1 L414.7 508.1 L415.3 506.4 L414.9 505.3 L414.9 503.2 L415.5 502.3 L415.3 499.9 L413.6 499.3 L412.2 498.6 L410.0 498.1 L407.9 496.9 L407.9 495.3 L406.0 492.8 L405.4 491.2 L406.1 489.8 L404.9 487.9 L404.0 486.5 L404.7 484.9 L404.0 482.9 L403.8 480.8 L404.1 479.8 L403.6 478.3 L403.4 475.9 L403.6 473.8 L404.3 472.3 L404.5 470.4 L404.1 469.1 L404.0 467.2 L404.7 466.0 L404.9 463.9 L405.9 462.4 L407.0 461.5 L408.8 459.6 L410.2 457.3 L410.8 456.5 L411.9 455.0 L412.8 454.2 L414.4 452.6 L415.3 450.5 L413.9 448.9 L414.2 447.1 L414.0 444.5 L412.5 443.2 L412.0 441.5 L410.5 442.4 L408.4 442.3 L405.9 443.1 L404.9 443.0 L403.2 443.3 L401.5 442.6 L399.7 441.8 L398.0 441.5 L395.9 441.4 L394.7 441.4 L392.9 441.5 L391.1 442.3 L389.4 442.3 L387.2 442.5 L385.9 442.4 L384.7 443.4 L382.9 444.0 L381.2 444.4 L379.4 444.5 L378.7 446.8 L379.5 448.4 L378.4 449.2 L378.0 451.9 L377.6 452.7 L377.9 455.0 L377.9 456.3 L376.7 459.1 L377.5 459.4 L376.5 462.3 L377.4 463.9 L375.9 465.7 L376.4 466.9 L376.7 469.2 L376.0 470.3 L375.4 472.5 L374.9 474.1 L374.9 475.9Z" fill="#88b9bb"/>
<path d="M415.3 499.9 L415.1 498.6 L415.6 496.6 L415.2 494.4 L414.6 492.3 L414.7 491.5 L415.3 489.4 L415.5 487.2 L415.8 486.5 L417.5 484.6 L417.2 482.3 L417.8 480.9 L418.2 479.2 L418.9 478.3 L419.8 475.9 L421.1 474.5 L420.6 473.6 L421.3 471.2 L421.5 469.8 L422.8 468.5 L423.0 467.0 L423.3 465.1 L424.0 463.8 L424.5 461.8 L425.8 461.0 L426.7 459.3 L428.3 458.4 L429.8 457.2 L430.9 456.2 L431.6 454.1 L433.0 453.0 L434.9 451.4 L435.7 451.0 L435.9 450.2 L438.4 448.8 L439.0 447.5 L440.7 446.7 L441.1 445.1 L443.0 444.3 L444.8 443.0 L445.7 441.3 L446.6 440.3 L447.5 438.5 L447.6 435.9 L448.3 434.8 L449.0 434.0 L450.4 431.9 L451.0 430.5 L451.6 429.0 L451.9 426.4 L452.9 425.9 L453.0 424.0 L453.5 422.4 L455.3 420.6 L457.0 419.7 L457.6 418.5 L459.8 417.7 L459.6 415.7 L459.2 415.3 L458.3 413.0 L458.5 411.0 L458.8 409.6 L459.5 407.7 L459.5 405.0 L459.0 403.5 L459.8 402.0 L460.9 400.1 L461.3 398.1 L461.3 396.9 L462.9 396.0 L463.6 393.8 L464.1 392.5 L464.7 390.4 L465.5 389.4 L462.9 390.1 L461.4 391.0 L461.0 392.7 L459.4 394.0 L459.3 396.0 L458.3 397.2 L457.5 399.3 L457.4 400.1 L457.7 402.2 L457.1 403.9 L456.7 405.1 L455.7 406.6 L455.2 408.8 L455.4 409.8 L453.7 411.1 L453.5 413.0 L453.5 413.8 L452.8 415.4 L451.5 417.3 L451.0 419.0 L448.8 419.3 L447.7 418.0 L446.5 417.6 L444.2 416.6 L442.9 415.3 L442.5 414.0 L440.9 413.0 L439.0 411.8 L437.4 412.1 L436.0 411.1 L434.2 409.9 L433.1 409.5 L431.5 408.3 L430.0 406.7 L430.3 405.9 L428.4 403.1 L428.3 402.0 L427.5 402.7 L425.2 403.9 L424.6 405.9 L422.4 405.9 L421.2 407.3 L420.3 408.2 L418.9 409.8 L417.8 410.9 L418.0 413.3 L415.9 415.2 L415.7 416.1 L414.5 417.5 L415.2 419.7 L414.2 420.7 L412.8 422.6 L412.6 424.0 L411.6 425.1 L411.5 426.4 L411.1 429.2 L411.1 430.3 L410.5 431.8 L409.3 433.6 L409.4 435.0 L409.8 436.9 L411.0 437.9 L411.0 439.9 L411.4 441.1 L412.0 441.5 L412.5 443.2 L414.0 444.5 L414.2 447.1 L413.9 448.9 L415.3 450.5 L414.4 452.6 L412.8 454.2 L411.9 455.0 L410.8 456.5 L410.2 457.3 L408.8 459.6 L407.0 461.5 L405.9 462.4 L404.9 463.9 L404.7 466.0 L404.0 467.2 L404.1 469.1 L404.5 470.4 L404.3 472.3 L403.6 473.8 L403.4 475.9 L403.6 478.3 L404.1 479.8 L403.8 480.8 L404.0 482.9 L404.7 484.9 L404.0 486.5 L404.9 487.9 L406.1 489.8 L405.4 491.2 L406.0 492.8 L407.9 495.3 L407.9 496.9 L410.0 498.1 L412.2 498.6 L413.6 499.3 L415.3 499.9Z" fill="#eedc55"/>
<path d="M460.4 305.2 L461.9 305.4 L463.5 306.8 L465.9 306.8 L467.6 306.9 L468.9 308.3 L470.6 307.5 L472.2 308.3 L474.6 307.5 L476.0 306.2 L478.7 306.0 L479.9 307.5 L481.9 307.4 L484.2 308.3 L484.8 307.7 L486.7 307.8 L489.0 308.6 L488.6 309.7 L487.7 312.3 L485.3 313.1 L485.5 315.4 L483.9 315.9 L483.0 317.8 L481.8 320.0 L481.0 321.0 L480.2 322.4 L480.6 323.3 L479.2 325.4 L478.8 327.0 L477.9 328.9 L476.0 330.7 L475.5 331.7 L476.1 332.6 L476.0 334.8 L477.3 336.1 L478.0 338.0 L476.7 339.3 L476.2 341.5 L475.0 342.9 L475.5 343.4 L474.2 345.5 L474.7 347.4 L474.5 348.4 L473.5 350.2 L473.5 352.0 L474.0 354.0 L472.7 355.6 L472.3 356.9 L472.4 359.4 L471.4 361.5 L471.2 363.2 L470.7 363.8 L470.6 365.3 L470.0 368.0 L470.3 369.4 L469.3 370.5 L469.2 373.0 L469.4 374.2 L468.8 375.3 L468.6 377.8 L468.3 379.9 L467.7 381.5 L466.9 382.4 L467.5 384.1 L466.3 386.0 L465.6 388.2 L465.5 389.4 L462.9 390.1 L461.4 391.0 L461.0 392.7 L459.4 394.0 L459.3 396.0 L458.3 397.2 L457.5 399.3 L457.4 400.1 L457.7 402.2 L457.1 403.9 L456.7 405.1 L455.7 406.6 L455.2 408.8 L455.4 409.8 L453.7 411.1 L453.5 413.0 L453.5 413.8 L452.8 415.4 L451.5 417.3 L451.0 419.0 L448.8 419.3 L447.7 418.0 L446.5 417.6 L444.2 416.6 L442.9 415.3 L442.5 414.0 L440.9 413.0 L439.0 411.8 L437.4 412.1 L436.0 411.1 L434.2 409.9 L433.1 409.5 L431.5 408.3 L430.0 406.7 L430.3 405.9 L428.4 403.1 L428.3 402.0 L427.6 399.9 L426.5 398.2 L424.8 396.8 L423.6 395.7 L423.8 394.3 L424.3 392.6 L424.0 390.3 L425.6 388.9 L425.5 387.0 L426.7 386.3 L428.3 384.6 L429.2 384.1 L431.8 383.7 L433.3 382.9 L433.9 381.4 L436.2 381.5 L436.5 379.4 L436.7 379.0 L437.8 376.8 L438.5 374.8 L439.7 374.9 L441.1 373.2 L442.9 371.5 L444.1 370.5 L444.0 369.1 L444.4 367.5 L444.0 365.7 L444.3 364.1 L444.2 361.9 L443.6 360.4 L444.0 358.0 L444.9 356.0 L445.1 354.2 L445.4 353.3 L445.1 350.5 L446.4 348.3 L446.8 346.9 L446.5 345.5 L446.4 344.0 L447.4 342.0 L447.3 340.1 L447.8 338.1 L447.7 336.7 L448.4 335.5 L448.4 333.7 L448.6 331.0 L449.5 330.0 L448.7 327.8 L449.1 326.7 L448.7 325.1 L448.0 323.5 L448.0 322.6 L449.9 321.0 L449.6 319.8 L451.0 317.8 L451.9 316.8 L454.1 315.4 L455.6 314.4 L456.0 312.3 L458.1 310.7 L458.8 308.4 L459.5 307.6 L460.4 305.2Z" fill="#eedc55"/>
<path d="M480.5 231.8 L484.0 231.0 L487.5 233.0 L488.5 236.5 L489.0 240.0 L486.0 240.5 L483.0 238.5 L480.5 236.0Z" fill="#f08a86"/>
<path d="M470.1 226.6 L472.6 228.2 L475.8 233.1 L479.0 235.5 L482.3 237.9 L477.4 239.6 L475.8 242.8 L479.0 245.2 L475.8 248.5 L470.9 247.7 L467.7 243.6 L466.9 239.6 L463.6 234.7 L464.4 229.8 L468.5 227.4Z" fill="none"/>
<path d="M390.0 320.0 L396.0 319.5 L400.0 321.5 L405.0 320.0 L407.2 322.5 L405.5 325.0 L399.0 325.5 L395.0 328.0 L390.5 327.3 L389.5 323.5Z" fill="none"/>
<path d="M373.5 384.5 L377.5 383.5 L381.5 386.0 L380.0 388.5 L376.5 387.5 L373.5 387.0Z" fill="none"/>
<path d="M347.7 423.3 L352.0 421.5 L357.9 422.0 L360.5 430.9 L356.6 436.0 L352.0 430.0Z" fill="none"/>
<path d="M361.5 455.0 L367.5 454.5 L369.0 462.0 L370.0 467.0 L375.0 472.0 L374.5 476.0 L369.0 472.0 L365.0 466.0 L362.5 460.0Z" fill="none"/>
<path d="M416.0 265.5 L420.0 261.5 L423.5 263.5 L426.0 266.5 L422.0 266.5 L418.5 271.0Z" fill="none"/>
<path d="M463.8 459.0 L466.0 459.5 L468.5 458.2 L467.5 462.5 L464.5 463.0Z" fill="#eedc55"/>
<path d="M467.0 513.5 L471.0 512.5 L472.5 515.5 L474.5 518.0 L473.5 520.5 L470.0 519.0 L467.5 517.0Z" fill="#eedc55"/>
<path d="M340.5 387.5L344 384L351.5 378.6" fill="none" stroke-width="1.6"/>
<path d="M370 488.5H372.8V491.2H370Z" fill="none" stroke-width="1.2"/>
<rect x="474" y="524.5" width="1" height="1"/>
</g>
<g font-family="Liberation Sans" font-size="11" fill="#10103a" letter-spacing="0.4">
<text x="462" y="238">Keelung</text>
<text x="474" y="249">Taipei</text>
<text x="425" y="253">Taoyuan</text>
<text x="416" y="279">Hsinchu</text>
<text x="468" y="288">Ilan</text>
<text x="405" y="298">Miaoli</text>
<text x="391" y="319">Taichung</text>
<text x="353" y="342">Changhua</text>
<text x="404" y="360">Nantou</text>
<text x="457" y="355">Hualien</text>
<text x="358" y="370">Yunlin</text>
<text x="381" y="392">Chiayi</text>
<text x="352" y="418">Tainan</text>
<text x="398" y="424">Kaohsiung</text>
<text x="407" y="435">Taitung</text>
<text x="374" y="475">Pingtung</text>
</g></svg><!--/MAP-->
<!-- scrollbar -->
<div class="a" style="left:842px;top:139px;width:16px;height:470px;background-color:#fff;background-image:linear-gradient(45deg,#D4D0C8 25%,transparent 25%,transparent 75%,#D4D0C8 75%),linear-gradient(45deg,#D4D0C8 25%,transparent 25%,transparent 75%,#D4D0C8 75%);background-size:2px 2px;background-position:0 0,1px 1px"></div>
<div class="a" style="left:842px;top:139px;width:16px;height:16px;background:#D4D0C8;border-style:solid;border-width:1px;border-color:#D4D0C8 #404040 #404040 #D4D0C8;box-shadow:inset 1px 1px #fff,inset -1px -1px #808080"></div>
<svg class="a" style="left:842px;top:139px" width="16" height="16" viewBox="0 0 16 16"><path d="M4 10H11L7.5 6.5Z" fill="#808080"/><path d="M4.5 10.5H12" stroke="#fff"/></svg>
<div class="a" style="left:842px;top:593px;width:16px;height:16px;background:#D4D0C8;border-style:solid;border-width:1px;border-color:#D4D0C8 #404040 #404040 #D4D0C8;box-shadow:inset 1px 1px #fff,inset -1px -1px #808080"></div>
<svg class="a" style="left:842px;top:593px" width="16" height="16" viewBox="0 0 16 16"><path d="M4 6H11L7.5 9.5Z" fill="#808080"/><path d="M7.5 10.5L11.5 6.5" stroke="#fff"/></svg>


<!-- status bar -->
<div class="a sunk" style="left:4px;top:613px;width:404px;height:18px"></div>
<div class="t" style="left:6px;top:616px;letter-spacing:-0.4px">Done</div>


<div class="a sunk" style="left:410px;top:613px;width:22px;height:18px"></div>
<div class="a sunk" style="left:434px;top:613px;width:22px;height:18px"></div>
<div class="a sunk" style="left:458px;top:613px;width:22px;height:18px"></div>
<div class="a sunk" style="left:482px;top:613px;width:22px;height:18px"></div>
<div class="a sunk" style="left:506px;top:613px;width:22px;height:18px"></div>
<div class="a sunk" style="left:530px;top:613px;width:22px;height:18px"></div>
<div class="a sunk" style="left:554px;top:613px;width:22px;height:18px"></div>
<svg class="a" style="left:555px;top:614px" width="18" height="17" viewBox="0 0 18 17"><path d="M5 2.5C7 0 10 0.5 10.5 3.5C11 6 12 7 12 8" fill="none" stroke="#e09a30" stroke-width="1.3"/><path d="M4.3 0.5C6.6 0.5 8 2 8 4C8 5.6 7 6.6 5.8 7V14.5L4.8 15.5L3.8 14.5V13.5L4.6 13V12L3.8 11.5V7C2.4 6.6 0.8 5.6 0.8 4C0.8 2 2.2 0.5 4.3 0.5Z" fill="#c5cad2" stroke="#7c8590" stroke-width="0.9"/><circle cx="4.4" cy="3.4" r="1.2" fill="#7c8590"/><circle cx="13" cy="11.8" r="4.3" fill="#1e8f2a" stroke="#0f6a18" stroke-width="0.6"/><path d="M10.9 11.8L12.5 13.5L15.2 10.3" fill="none" stroke="#fff" stroke-width="1.4"/></svg>
<div class="a sunk" style="left:578px;top:613px;width:151px;height:18px"></div>
<svg class="a" style="left:580px;top:615px" width="15" height="14" viewBox="0 0 15 14"><path d="M1.2 7.5L5 11.8L13.8 1.2" fill="none" stroke="#3ccb3c" stroke-width="2.4"/></svg>
<div class="t" style="left:600px;top:616px">Trusted sites</div>
<div class="a sunk" style="left:731px;top:613px;width:35px;height:18px"></div>
<svg class="a" style="left:734px;top:615px" width="18" height="16" viewBox="0 0 18 16"><path d="M1 6.5L4 2.5H7.5" fill="none" stroke="#b0b0b0" stroke-width="1.4"/><rect x="7" y="8" width="8" height="6" fill="#a8a8a8"/><path d="M8.5 8V5.5a2.5 2.5 0 0 1 5 0V8" fill="none" stroke="#a8a8a8" stroke-width="1.4"/><path d="M1.5 4L6 9" stroke="#c0c0c0" stroke-width="1.3"/></svg>
<div class="tri" style="left:755px;top:622px"></div>
<div class="a sunk" style="left:768px;top:613px;width:92px;height:18px"></div>
<svg class="a" style="left:773px;top:614px" width="14" height="15" viewBox="0 0 14 15"><circle cx="5" cy="5" r="4.3" fill="#fff" stroke="#3069c6" stroke-width="1.2"/><path d="M5 2.5V7.5M2.5 5H7.5" stroke="#1c56c2" stroke-width="1.6"/><path d="M8 8L12.5 12.5" stroke="#b5652a" stroke-width="2.2"/></svg>
<div class="t" style="left:788px;top:616px">100%</div>
<div class="tri" style="left:832px;top:621px"></div>
<div class="a" style="left:847px;top:617px;width:13px;height:14px;background:#D4D0C8"></div><svg class="a" style="left:846px;top:617px" width="14" height="14" viewBox="0 0 14 14"><path d="M1 13.5L13.5 1M5 13.5L13.5 5M9 13.5L13.5 9" stroke="#fff" stroke-width="1"/><path d="M2.5 13.5L13.5 2.5M6.5 13.5L13.5 6.5M10.5 13.5L13.5 10.5" stroke="#808080" stroke-width="1.6"/></svg>

</body></html>
